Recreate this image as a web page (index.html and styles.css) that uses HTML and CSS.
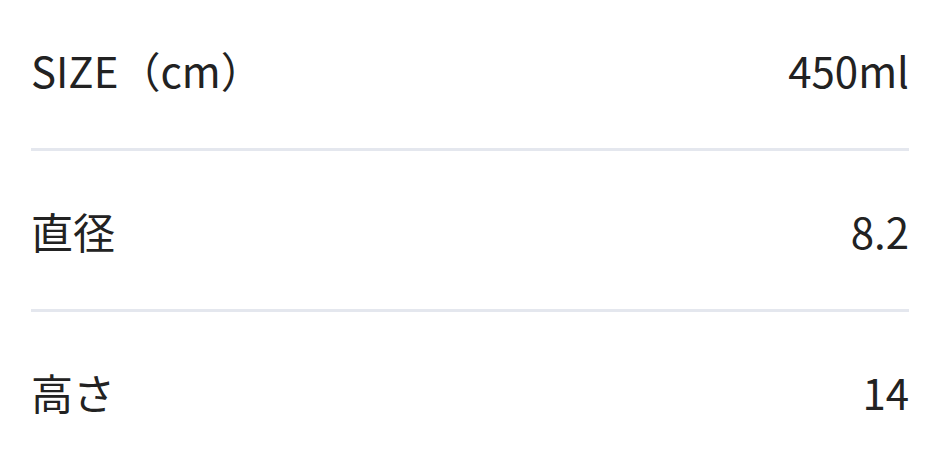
FILE: index.html
```html
<!DOCTYPE html>
<html lang="ja">
<head>
  <meta charset="UTF-8">
  <meta name="viewport" content="width=device-width, initial-scale=1">
  <title>サイズ</title>
  <link rel="stylesheet" href="styles.css">
</head>
<body>

<div class="spec-list">
  <div class="spec-row">
    <span class="spec-label">SIZE（cm）</span>
    <span class="spec-value">450ml</span>
  </div>
  <div class="spec-row">
    <span class="spec-label">直径</span>
    <span class="spec-value">8.2</span>
  </div>
  <div class="spec-row">
    <span class="spec-label">高さ</span>
    <span class="spec-value">14</span>
  </div>
</div>

</body>
</html>
```

FILE: styles.css
```css
body {
  margin: 0;
  padding: 0;
  background: #ffffff;
  color: #222222;
  font-family: "Noto Sans CJK JP", "Noto Sans", sans-serif;
}

.spec-list {
  padding: 0 30px 0 31px;
}

.spec-row {
  display: flex;
  justify-content: space-between;
  align-items: center;
  font-size: 42px;
  line-height: 60px;
  padding: 50px 0 48px;
  border-bottom: 3px solid #e4e7ee;
}

.spec-row:first-child {
  padding-top: 40px;
}

.spec-row:last-child {
  border-bottom: none;
}
```
